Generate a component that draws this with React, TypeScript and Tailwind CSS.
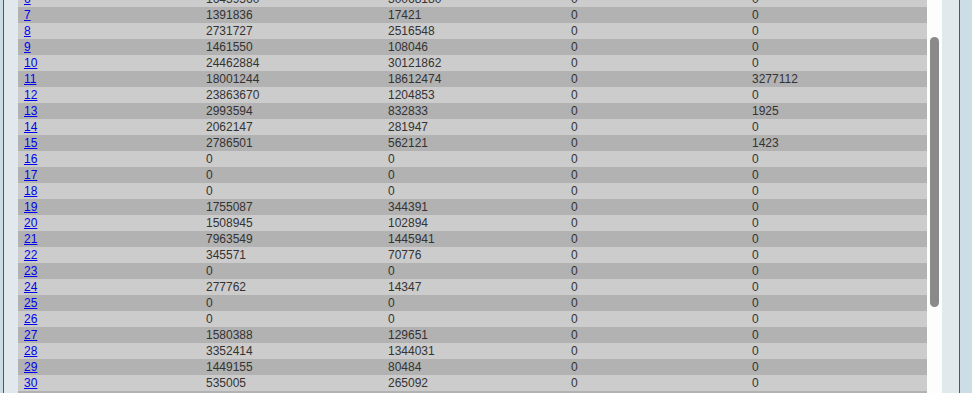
const rows: [number, string, string, string, string][] = [
  [6, "16459560", "30068180", "0", "0"],
  [7, "1391836", "17421", "0", "0"],
  [8, "2731727", "2516548", "0", "0"],
  [9, "1461550", "108046", "0", "0"],
  [10, "24462884", "30121862", "0", "0"],
  [11, "18001244", "18612474", "0", "3277112"],
  [12, "23863670", "1204853", "0", "0"],
  [13, "2993594", "832833", "0", "1925"],
  [14, "2062147", "281947", "0", "0"],
  [15, "2786501", "562121", "0", "1423"],
  [16, "0", "0", "0", "0"],
  [17, "0", "0", "0", "0"],
  [18, "0", "0", "0", "0"],
  [19, "1755087", "344391", "0", "0"],
  [20, "1508945", "102894", "0", "0"],
  [21, "7963549", "1445941", "0", "0"],
  [22, "345571", "70776", "0", "0"],
  [23, "0", "0", "0", "0"],
  [24, "277762", "14347", "0", "0"],
  [25, "0", "0", "0", "0"],
  [26, "0", "0", "0", "0"],
  [27, "1580388", "129651", "0", "0"],
  [28, "3352414", "1344031", "0", "0"],
  [29, "1449155", "80484", "0", "0"],
  [30, "535005", "265092", "0", "0"],
  [31, "0", "0", "0", "0"],
];

export default function App() {
  return (
    <div className="h-[393px] w-[972px] overflow-hidden bg-[#cddde5] pl-[3px] pr-[12px] font-['Liberation_Sans',Arial,sans-serif] text-[12px] leading-[16px] text-[#333]">
      <div className="flex h-full border-x border-[#2d6189] bg-[#e2e9ec] pl-[14px] pr-[16px]">
        {/* Table */}
        <div className="w-[909px] overflow-hidden">
          <div className="mt-[-9px]">
            {rows.map(([id, a, b, c, d]) => (
              <div
                key={id}
                className={`grid h-[16px] grid-cols-[182px_182px_183px_181px_1fr] ${
                  id % 2 === 1 ? "bg-[#b2b2b2]" : "bg-[#cccccc]"
                }`}
              >
                <div className="pl-[6px]">
                  <a href="#" className="text-[#0000ee] underline">
                    {id}
                  </a>
                </div>
                <div className="pl-[6px]">{a}</div>
                <div className="pl-[6px]">{b}</div>
                <div className="pl-[6px]">{c}</div>
                <div className="pl-[6px]">{d}</div>
              </div>
            ))}
          </div>
        </div>

        {/* Scrollbar */}
        <div className="w-[15px] bg-[#fdfdfd] pl-[3px]">
          <div className="mt-[37px] h-[270px] w-[9px] rounded-full bg-[#8a8a8a]" />
        </div>
      </div>
    </div>
  );
}
